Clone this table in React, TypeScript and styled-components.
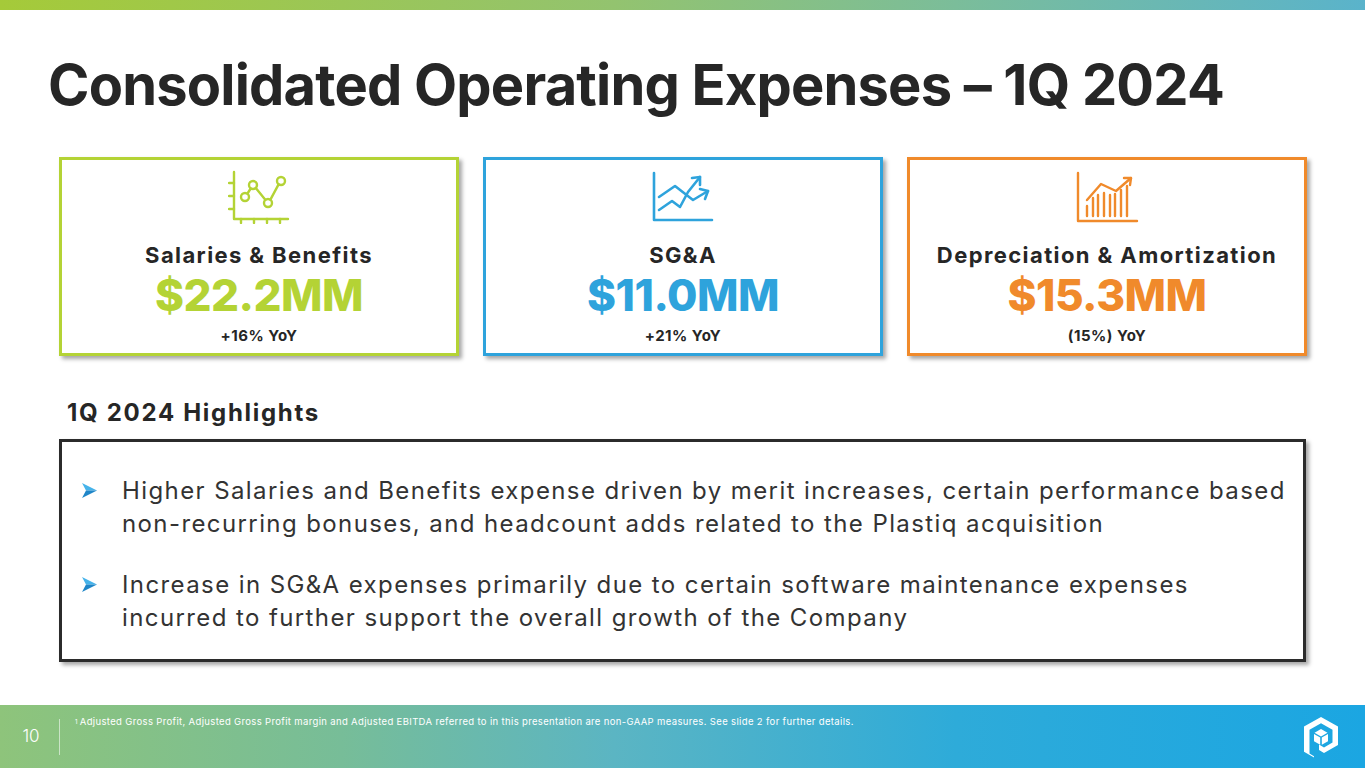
import React from "react";
import styled, { createGlobalStyle } from "styled-components";

const GlobalStyle = createGlobalStyle`
  html, body {
    margin: 0;
    padding: 0;
    background: #ffffff;
  }
  body {
    font-family: "Inter", "Noto Sans", sans-serif;
    color: #262626;
  }
`;

const COLORS = {
  lime: "#b4d335",
  blue: "#2ea3dc",
  orange: "#f08a2b",
  ink: "#262626",
};

const Slide = styled.div`
  width: 1365px;
  height: 768px;
  display: flex;
  flex-direction: column;
  overflow: hidden;
  background: #ffffff;
`;

const TopBar = styled.div`
  height: 10px;
  flex-shrink: 0;
  background: linear-gradient(90deg, #a5ca39 0%, #93c36f 45%, #7bbd9a 70%, #5ab3cb 100%);
`;

const Title = styled.h1`
  margin: 43px 0 0 48px;
  font-size: 56px;
  line-height: 64px;
  font-weight: 700;
  letter-spacing: -0.8px;
  color: ${COLORS.ink};
`;

const CardRow = styled.div`
  display: flex;
  gap: 24px;
  margin: 40px 0 0 59px;
`;

const Card = styled.div<{ $color: string }>`
  width: 400px;
  height: 199px;
  box-sizing: border-box;
  border: 3px solid ${(p) => p.$color};
  box-shadow: 3px 3px 4px rgba(0, 0, 0, 0.35);
  display: flex;
  flex-direction: column;
  align-items: center;
  padding-top: 8px;
`;

const IconBox = styled.div`
  height: 56px;
  display: flex;
  align-items: flex-end;
  justify-content: center;
`;

const CardLabel = styled.div`
  margin-top: 18px;
  font-size: 22px;
  line-height: 26px;
  font-weight: 700;
  letter-spacing: 1.4px;
  color: ${COLORS.ink};
`;

const CardValue = styled.div<{ $color: string }>`
  font-size: 44px;
  line-height: 54px;
  font-weight: 800;
  letter-spacing: -0.5px;
  color: ${(p) => p.$color};
`;

const CardChange = styled.div`
  margin-top: 4px;
  font-size: 15px;
  line-height: 20px;
  font-weight: 700;
  letter-spacing: 0.5px;
  color: ${COLORS.ink};
`;

const SectionTitle = styled.h2`
  margin: 43px 0 0 67px;
  font-size: 24px;
  line-height: 28px;
  font-weight: 700;
  letter-spacing: 1.7px;
  color: ${COLORS.ink};
`;

const HighlightBox = styled.div`
  margin: 12px 0 0 59px;
  width: 1247px;
  height: 223px;
  box-sizing: border-box;
  border: 3px solid #2b2b2b;
  box-shadow: 3px 3px 4px rgba(0, 0, 0, 0.35);
  padding: 32px 0 0 20px;
  display: flex;
  flex-direction: column;
  gap: 28px;
`;

const Bullet = styled.div`
  display: flex;
  align-items: flex-start;
  gap: 20px;
`;

const BulletMark = styled.div`
  width: 20px;
  height: 33px;
  display: flex;
  align-items: center;
  justify-content: flex-start;
  flex-shrink: 0;
`;

const BulletText = styled.p`
  margin: 0;
  font-size: 24px;
  line-height: 33px;
  font-weight: 400;
  letter-spacing: 1.4px;
  color: #333333;
  white-space: nowrap;
`;

const Footer = styled.div`
  margin-top: auto;
  height: 63px;
  flex-shrink: 0;
  display: flex;
  align-items: flex-start;
  background: linear-gradient(90deg, #8ec47b 0%, #77bd98 25%, #5bb5c3 45%, #2eabd9 70%, #1ba6e2 100%);
  color: #ffffff;
`;

const PageNum = styled.div`
  width: 59px;
  padding: 21px 0 0 3px;
  text-align: center;
  box-sizing: border-box;
  font-size: 17px;
  line-height: 20px;
  font-weight: 300;
`;

const Divider = styled.div`
  width: 1px;
  height: 36px;
  margin-top: 14px;
  background: rgba(255, 255, 255, 0.55);
`;

const FootNote = styled.div`
  margin: 11px 0 0 15px;
  font-size: 9.5px;
  line-height: 12px;
  letter-spacing: 0.35px;
  flex: 1;
  sup {
    font-size: 6px;
    vertical-align: top;
    margin-right: 2px;
  }
`;

const LogoBox = styled.div`
  width: 62px;
  padding-top: 11px;
`;

const SalariesIcon = () => (
  <svg width="62" height="56" viewBox="0 0 62 56" fill="none" stroke={COLORS.lime} strokeWidth="2.4" strokeLinecap="round" strokeLinejoin="round">
    <path d="M6 4 V51 H60" />
    <path d="M1 15 H6 M1 28 H6 M1 41 H6" />
    <path d="M13 51 V55 M26 51 V55 M39 51 V55 M52 51 V55" />
    <path d="M19.5 25.5 L22.7 20.5 M27.8 20 L37.3 31.8 M42.4 31.6 L50.6 16.4" />
    <circle cx="17" cy="29" r="4" />
    <circle cx="25" cy="17" r="4" />
    <circle cx="40" cy="35" r="4" />
    <circle cx="53" cy="13" r="4" />
  </svg>
);

const SgaIcon = () => (
  <svg width="66" height="54" viewBox="0 0 66 54" fill="none" stroke={COLORS.blue} strokeWidth="2.6" strokeLinecap="round" strokeLinejoin="round">
    <path d="M4 3 V50 H62" />
    <path d="M9 27 L25 16 L43 30 L58 21" />
    <path d="M50 19 L58 21 L55 29" />
    <path d="M9 40 L22 31 L30 37 L38 22 L50 7" />
    <path d="M42 8 L50 7 L50 15" />
  </svg>
);

const DaIcon = () => {
  const bars = [
    [12, 36],
    [18, 28],
    [23, 25],
    [29, 23],
    [35, 25],
    [40, 24],
    [46, 20],
    [52, 16],
  ];
  return (
    <svg width="64" height="54" viewBox="0 0 64 54" fill="none" stroke={COLORS.orange} strokeWidth="2.4" strokeLinecap="round" strokeLinejoin="round">
      <path d="M3 3 V51 H62" />
      {bars.map(([x, top]) => (
        <path key={x} d={`M${x} ${top} V46`} />
      ))}
      <path d="M12 30 L26 14 L41 21 L56 8" />
      <path d="M49 8 L56 8 L55 15" />
    </svg>
  );
};

const ArrowBullet = () => (
  <svg width="15" height="15" viewBox="0 0 15 15">
    <path d="M0 0 L15 7.5 L4 7.5 Z" fill="#46b3ea" />
    <path d="M0 15 L15 7.5 L4 7.5 Z" fill="#1f86c8" />
  </svg>
);

const Logo = () => (
  <svg width="36" height="42" viewBox="0 0 36 42" fill="#ffffff">
    <path d="M18 1 L35 10.5 V29 L21 37 L16 34 V28.5 L21 31.5 L29.5 26.5 V13.8 L18 7.3 L6.5 13.8 V37.5 L11 40.3 V41.5 L1 35.8 V10.5 Z" />
    <path d="M18 13 L24.5 16.7 L18 20.4 L11.5 16.7 Z" />
    <path d="M11 18 L17.2 21.6 V28.8 L11 25.2 Z" />
    <path d="M25 18 V25.2 L18.8 28.8 V21.6 Z" />
  </svg>
);

type Metric = {
  label: string;
  value: string;
  change: string;
  color: string;
  icon: React.ReactNode;
};

const METRICS: Metric[] = [
  { label: "Salaries & Benefits", value: "$22.2MM", change: "+16% YoY", color: COLORS.lime, icon: <SalariesIcon /> },
  { label: "SG&A", value: "$11.0MM", change: "+21% YoY", color: COLORS.blue, icon: <SgaIcon /> },
  { label: "Depreciation & Amortization", value: "$15.3MM", change: "(15%) YoY", color: COLORS.orange, icon: <DaIcon /> },
];

const HIGHLIGHTS = [
  [
    "Higher Salaries and Benefits expense driven by merit increases, certain performance based",
    "non-recurring bonuses, and headcount adds related to the Plastiq acquisition",
  ],
  [
    "Increase in SG&A expenses primarily due to certain software maintenance expenses",
    "incurred to further support the overall growth of the Company",
  ],
];

const App: React.FC = () => {
  return (
    <Slide>
      <GlobalStyle />
      <TopBar />
      <Title>Consolidated Operating Expenses – 1Q 2024</Title>
      <CardRow>
        {METRICS.map((m) => (
          <Card key={m.label} $color={m.color}>
            <IconBox>{m.icon}</IconBox>
            <CardLabel>{m.label}</CardLabel>
            <CardValue $color={m.color}>{m.value}</CardValue>
            <CardChange>{m.change}</CardChange>
          </Card>
        ))}
      </CardRow>
      <SectionTitle>1Q 2024 Highlights</SectionTitle>
      <HighlightBox>
        {HIGHLIGHTS.map((lines) => (
          <Bullet key={lines[0]}>
            <BulletMark>
              <ArrowBullet />
            </BulletMark>
            <BulletText>
              {lines[0]}
              <br />
              {lines[1]}
            </BulletText>
          </Bullet>
        ))}
      </HighlightBox>
      <Footer>
        <PageNum>10</PageNum>
        <Divider />
        <FootNote>
          <sup>1</sup>Adjusted Gross Profit, Adjusted Gross Profit margin and Adjusted EBITDA referred to in this presentation are non-GAAP measures. See slide 2 for further details.
        </FootNote>
        <LogoBox>
          <Logo />
        </LogoBox>
      </Footer>
    </Slide>
  );
};

export default App;
